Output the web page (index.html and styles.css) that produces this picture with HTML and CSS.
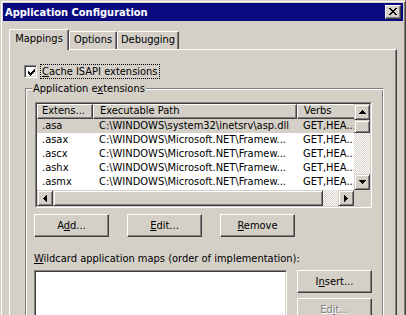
FILE: index.html
```html
<!DOCTYPE html>
<html>
<head>
<meta charset="utf-8">
<link rel="stylesheet" href="styles.css">
</head>
<body>
<div class="window">
  <div class="titlebar">
    <span class="title">Application Configuration</span>
    <span class="close"><svg width="8" height="7" viewBox="0 0 8 7" shape-rendering="crispEdges"><path d="M0 0h2v1H0zM6 0h2v1H6zM1 1h2v1H1zM5 1h2v1H5zM2 2h4v1H2zM3 3h2v1H3zM2 4h4v1H2zM1 5h2v1H1zM5 5h2v1H5zM0 6h2v1H0zM6 6h2v1H6z" fill="#000"/></svg></span>
  </div>
  <div class="client">
    <div class="tabs">
      <div class="tab active w1">Mappings</div>
      <div class="tab w2">Options</div>
      <div class="tab w3">Debugging</div>
    </div>
    <div class="panel">
      <div class="check">
        <span class="box"><svg width="7" height="7" viewBox="0 0 7 7" shape-rendering="crispEdges"><path d="M0 2h1v3H0zM1 3h1v3H1zM2 4h1v3H2zM3 3h1v3H3zM4 2h1v3H4zM5 1h1v3H5zM6 0h1v3H6z" fill="#000"/></svg></span>
        <span class="focus"><u>C</u>ache ISAPI extensions</span>
      </div>
      <fieldset class="group">
        <legend>Application e<u>x</u>tensions</legend>
        <div class="lv-outer">
          <div class="lv">
            <div class="lv-main">
              <div class="lv-head">
                <div class="hcell c1">Extens...</div>
                <div class="hcell">Executable Path</div>
                <div class="hcell">Verbs</div>
              </div>
              <div class="row sel"><span class="c1">.asa</span><span>C:\WINDOWS\system32\inetsrv\asp.dll</span><span>GET,HEA...</span></div>
              <div class="row"><span class="c1">.asax</span><span>C:\WINDOWS\Microsoft.NET\Framew...</span><span>GET,HEA...</span></div>
              <div class="row"><span class="c1">.ascx</span><span>C:\WINDOWS\Microsoft.NET\Framew...</span><span>GET,HEA...</span></div>
              <div class="row"><span class="c1">.ashx</span><span>C:\WINDOWS\Microsoft.NET\Framew...</span><span>GET,HEA...</span></div>
              <div class="row"><span class="c1">.asmx</span><span>C:\WINDOWS\Microsoft.NET\Framew...</span><span>GET,HEA...</span></div>
            </div>
            <div class="vscroll">
              <span class="sbtn"><svg width="7" height="4" viewBox="0 0 7 4" shape-rendering="crispEdges"><path d="M3 0h1v1h1v1h1v1h1v1H0V3h1V2h1V1h1z"/></svg></span>
              <span class="thumb vt"></span>
              <span class="track"></span>
              <span class="sbtn"><svg width="7" height="4" viewBox="0 0 7 4" shape-rendering="crispEdges"><path d="M0 0h7v1H6v1H5v1H4v1H3V3H2V2H1V1H0z"/></svg></span>
            </div>
            <div class="hscroll">
              <span class="sbtn"><svg width="4" height="7" viewBox="0 0 4 7" shape-rendering="crispEdges"><path d="M0 3h1V2h1V1h1V0h1v7H3V6H2V5H1V4H0z"/></svg></span>
              <span class="thumb ht"></span>
              <span class="track"></span>
              <span class="sbtn"><svg width="4" height="7" viewBox="0 0 4 7" shape-rendering="crispEdges"><path d="M0 0h1v1h1v1h1v1h1v1H3v1H2v1H1v1H0z"/></svg></span>
            </div>
            <div class="corner"></div>
          </div>
        </div>
        <div class="btnrow">
          <button class="btn">A<u>d</u>d...</button>
          <button class="btn"><u>E</u>dit...</button>
          <button class="btn"><u>R</u>emove</button>
        </div>
        <div class="wlabel"><u>W</u>ildcard application maps (order of implementation):</div>
        <div class="wild">
          <div class="listbox"></div>
          <div class="wbtns">
            <button class="btn">I<u>n</u>sert...</button>
            <button class="btn disabled">Ed<u>i</u>t...</button>
          </div>
        </div>
      </fieldset>
    </div>
  </div>
</div>
</body>
</html>
```
FILE: styles.css
```css
* { box-sizing: border-box; }
html, body { margin: 0; padding: 0; }
body {
  width: 406px; height: 315px; overflow: hidden;
  background: #d4d0c8;
  font-family: "DejaVu Sans Condensed", "DejaVu Sans", sans-serif;
  font-stretch: condensed;
  font-size: 11px; line-height: 13px; color: #000;
}
u { text-decoration: underline; text-underline-offset: 1px; }
.window {
  width: 406px; height: 360px;
  border: 1px solid; border-color: #d4d0c8 #404040 #404040 #d4d0c8;
  box-shadow: inset 1px 1px #fff, inset -1px -1px #808080;
  padding: 2px;
}
.titlebar {
  height: 18px; background: #0a0a80;
  display: flex; align-items: center; justify-content: space-between;
  padding: 0 2px 0 2px;
}
.title { color: #fff; font-weight: bold; }
.close {
  width: 16px; height: 14px; background: #d4d0c8;
  border: 1px solid; border-color: #fff #404040 #404040 #fff;
  box-shadow: inset -1px -1px #808080;
  display: flex; align-items: center; justify-content: center;
  padding: 0 1px 1px 0;
}
.close svg { display: block; }
.client { padding: 8px 6px 0 6px; }
.tabs { display: flex; align-items: flex-end; height: 20px; }
.tab {
  height: 18px; text-align: center; line-height: 15px;
  border: 1px solid; border-bottom: 0;
  border-color: #fff #404040 #404040 #fff;
  border-radius: 2px 2px 0 0;
  box-shadow: inset -1px 0 #808080;
  background: #d4d0c8;
}
.tab.active { height: 21px; margin-bottom: -1px; position: relative; z-index: 1; line-height: 17px; }
.w1 { width: 60px; }
.w2 { width: 48px; }
.w3 { width: 62px; }
.panel {
  height: 320px;
  border: 1px solid; border-color: #fff #404040 #404040 #fff;
  box-shadow: inset -1px -1px #808080;
  padding: 14px 12px 0 14px;
}
.check { display: flex; align-items: center; height: 14px; }
.box {
  width: 13px; height: 13px; background: #fff;
  border: 1px solid; border-color: #808080 #fff #fff #808080;
  box-shadow: inset 1px 1px #404040, inset -1px -1px #d4d0c8;
  padding: 2px 0 0 2px;
}
.box svg { display: block; margin: 1px 0 0 1px; }
.focus { margin-left: 4px; padding: 0 1px; outline: 1px dotted #000; line-height: 13px; }
.group {
  margin: 4px 0 0 1px; min-width: 0;
  border: 1px solid; border-color: #808080 #fff #fff #808080;
  box-shadow: inset 1px 1px #fff, inset -1px -1px #808080;
  padding: 7px 11px 0 9px;
}
.group legend { padding: 0 1px; margin-left: -3px; background: #d4d0c8; line-height: 13px; }
.lv-outer {
  border: 1px solid; border-color: #808080 #fff #fff #808080;
}
.lv {
  border: 1px solid; border-color: #404040 #d4d0c8 #d4d0c8 #404040;
  background: #fff;
  display: grid; grid-template-columns: 1fr 16px; grid-template-rows: 86px 16px;
  height: 104px;
}
.lv-main { overflow: hidden; }
.lv-head, .row {
  display: grid; grid-template-columns: 56px 204px 80px;
  white-space: nowrap;
}
.lv-head { height: 15px; }
.hcell {
  background: #d4d0c8;
  border: 1px solid; border-color: #fff #404040 #404040 #fff;
  box-shadow: inset -1px -1px #808080;
  padding-left: 6px; line-height: 12px; overflow: hidden;
}
.hcell.c1 { padding-left: 4px; }
.row { height: 14px; line-height: 14px; }
.row span { padding-left: 6px; overflow: hidden; }
.row span.c1 { padding-left: 5px; }
.row.sel { background: #d4d0c8; }
.vscroll { display: flex; flex-direction: column; }
.hscroll { display: flex; }
.sbtn, .thumb {
  flex: none; width: 16px; height: 16px; background: #d4d0c8;
  border: 1px solid; border-color: #d4d0c8 #404040 #404040 #d4d0c8;
  box-shadow: inset 1px 1px #fff, inset -1px -1px #808080;
  display: flex; align-items: center; justify-content: center;
}
.sbtn svg { display: block; fill: #000; }
.vt { height: 13px; }
.ht { width: 270px; }
.track {
  flex: 1;
  background: repeating-conic-gradient(#fff 0 25%, #d4d0c8 0 50%) 0 0 / 2px 2px;
}
.corner { background: #d4d0c8; }
.btnrow { display: flex; gap: 18px; margin: 6px 0 0 -1px; }
.btn {
  width: 75px; height: 23px; padding: 0; margin: 0;
  font: inherit; color: #000; background: #d4d0c8;
  border: 1px solid; border-color: #fff #404040 #404040 #fff;
  box-shadow: inset -1px -1px #808080;
  text-align: center;
}
.btn.disabled { color: #808080; text-shadow: 1px 1px #fff; }
.wlabel { margin: 15px 0 0 -1px; }
.wild { display: flex; gap: 10px; margin-top: 5px; }
.listbox {
  width: 253px; height: 80px; background: #fff; margin-left: -1px;
  border: 1px solid; border-color: #808080 #fff #fff #808080;
  box-shadow: inset 1px 1px #404040, inset -1px -1px #d4d0c8;
}
.wbtns { display: flex; flex-direction: column; gap: 5px; }
```
